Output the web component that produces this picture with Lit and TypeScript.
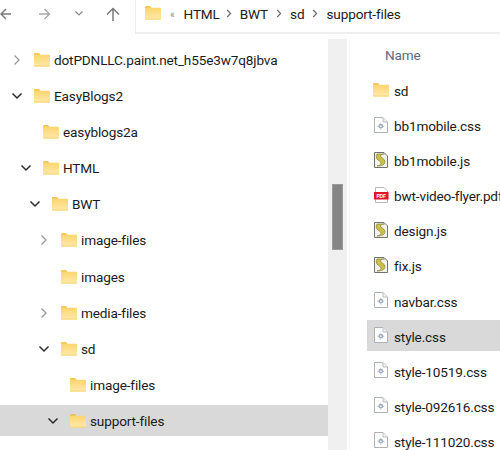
import { LitElement, html, css, svg } from "lit";
import { customElement } from "lit/decorators.js";

type TreeRow = { name: string; level: number; chev?: "open" | "closed"; sel?: boolean };
type FileRow = { name: string; kind: "folder" | "css" | "js" | "pdf"; sel?: boolean };

const tree: TreeRow[] = [
  { name: "dotPDNLLC.paint.net_h55e3w7q8jbva", level: 0, chev: "closed" },
  { name: "EasyBlogs2", level: 0, chev: "open" },
  { name: "easyblogs2a", level: 1 },
  { name: "HTML", level: 1, chev: "open" },
  { name: "BWT", level: 2, chev: "open" },
  { name: "image-files", level: 3, chev: "closed" },
  { name: "images", level: 3 },
  { name: "media-files", level: 3, chev: "closed" },
  { name: "sd", level: 3, chev: "open" },
  { name: "image-files", level: 4 },
  { name: "support-files", level: 4, chev: "open", sel: true },
];

const files: FileRow[] = [
  { name: "sd", kind: "folder" },
  { name: "bb1mobile.css", kind: "css" },
  { name: "bb1mobile.js", kind: "js" },
  { name: "bwt-video-flyer.pdf", kind: "pdf" },
  { name: "design.js", kind: "js" },
  { name: "fix.js", kind: "js" },
  { name: "navbar.css", kind: "css" },
  { name: "style.css", kind: "css", sel: true },
  { name: "style-10519.css", kind: "css" },
  { name: "style-092616.css", kind: "css" },
  { name: "style-111020.css", kind: "css" },
];

const folder = svg`<svg class="ico" width="16" height="14" viewBox="0 0 16 14">
  <defs><linearGradient id="fg" x1="0" y1="0" x2="0" y2="1"><stop offset="0" stop-color="#fcd56e"/><stop offset="1" stop-color="#ffe9ad"/></linearGradient></defs>
  <path d="M0 1.5C0 .7.5.2 1.2.2H5l1.6 1.6H0z" fill="#f4b51f"/>
  <rect x="0" y="1.8" width="16" height="11.7" rx=".6" fill="url(#fg)"/>
  <rect x="0" y="12.6" width="16" height=".9" fill="#f8cf62"/>
</svg>`;

const pageOutline = svg`<path d="M.5.5H9L13.5 5V15.5H.5z" fill="#fff" stroke="#aeb1b6"/><path d="M9 .5V5h4.5" fill="#eef0f2" stroke="#bcbfc3"/>`;

const cssIcon = svg`<svg class="ico" width="14" height="16" viewBox="0 0 14 16">${pageOutline}
  <circle cx="6.8" cy="9.2" r="2.4" fill="#9fadbd"/><circle cx="6.8" cy="9.2" r="1" fill="#e6eaee"/>
  <path d="M6.8 5.8v1M6.8 11.6v1M3.4 9.2h1M9.2 9.2h1" stroke="#a9b6c4" stroke-width="1"/></svg>`;

const jsIcon = svg`<svg class="ico" width="14" height="16" viewBox="0 0 14 16">
  <path d="M.5.5H10L13.5 4V15.5H.5z" fill="#f4f4ee" stroke="#73736e"/>
  <path d="M3 2H10.5C8.5 2 6.5 2.6 6.5 4.2 6.5 5.8 11 6.4 11 9.6 11 12.6 8 14 3 14 5.6 13.4 7 12.8 7 11.2 7 9 2.2 8 2.2 5 2.2 3.6 2.6 2.6 3 2z" fill="#cdbf45" stroke="#7a7636" stroke-width=".6"/></svg>`;

const pdfIcon = svg`<svg class="ico" width="15" height="16" viewBox="0 0 15 16">
  <path d="M1.5.5H10L13.5 4V15.5H1.5z" fill="#fff" stroke="#b4b6ba"/>
  <rect x="0" y="5" width="14.5" height="7.5" fill="#e5132a"/>
  <text x="7.2" y="10.6" text-anchor="middle" font-family="Liberation Sans, sans-serif" font-size="5" font-weight="700" fill="#fff">PDF</text></svg>`;

const icons = { folder, css: cssIcon, js: jsIcon, pdf: pdfIcon };

const chevClosed = svg`<svg width="10" height="12" viewBox="0 0 10 12"><path d="M2.5 1.5 7 6 2.5 10.5" fill="none" stroke="#9a9a9a" stroke-width="1.3"/></svg>`;
const chevOpen = svg`<svg width="12" height="10" viewBox="0 0 12 10"><path d="M1.5 2.5 6 7l4.5-4.5" fill="none" stroke="#2b2b2b" stroke-width="1.5"/></svg>`;

const sep = html`<svg class="sep" width="6" height="9" viewBox="0 0 6 9"><path d="M1.2 1 4.6 4.5 1.2 8" fill="none" stroke="#6d6d6d" stroke-width="1.2"/></svg>`;

@customElement("app-root")
export class AppRoot extends LitElement {
  static styles = css`
    :host {
      display: block;
      width: 500px;
      height: 450px;
      overflow: hidden;
      background: #fff;
      color: #1b1b1b;
      font-family: Roboto, "Open Sans", sans-serif;
      font-size: 13.6px;
      letter-spacing: -0.15px;
    }
    .toolbar { display: flex; height: 34px; align-items: stretch; }
    .nav { width: 135px; flex: none; position: relative; }
    .nav svg { position: absolute; }
    .addr {
      flex: 1;
      display: flex;
      align-items: center;
      border-left: 1px solid #efefef;
      border-bottom: 2px solid #efefef;
      padding: 0 0 6px 9px;
      gap: 8px;
      white-space: nowrap;
    }
    .addr .dbl { color: #8a8a8a; font-size: 10px; margin: 0 1px 0 1px; }
    .addr .first { margin-right: -2px; }
    .addr span { padding-top: 2px; }
    .sep { flex: none; }
    .body { display: flex; height: 416px; }
    .tree { width: 328px; flex: none; padding-top: 10.5px; box-sizing: border-box; display: flex; flex-direction: column; gap: 5.1px; }
    .trow { display: flex; align-items: center; height: 31px; flex: none; box-sizing: border-box; white-space: nowrap; }
    .trow.sel { background: #d9d9d9; }
    .tchev { width: 14px; flex: none; display: flex; justify-content: center; margin-right: 10px; }
    .ttext { margin-left: 4px; }
    .ico { flex: none; display: block; }
    .scroll { width: 19px; flex: none; margin-top: 5px; background: #f0f0f0; padding-top: 145px; box-sizing: border-box; display: flex; justify-content: center; align-items: flex-start; }
    .thumb { width: 11px; height: 66px; background: #858585; border: 1px solid #9a9a9a; box-sizing: border-box; }
    .divider { width: 3px; flex: none; margin-top: 5px; box-sizing: border-box; background: #fff; border-right: 1px solid #f3f3f3; }
    .list { flex: 1; min-width: 0; padding-top: 4px; overflow: hidden; }
    .head { height: 36px; padding-left: 35px; color: #5a6b80; }
    .head span { line-height: 34px; }
    .lrows { margin-left: 17px; display: flex; flex-direction: column; gap: 4.1px; }
    .lrow { display: flex; align-items: center; height: 31px; flex: none; white-space: nowrap; padding-left: 6px; box-sizing: border-box; }
    .lrow.sel { background: #d9d9d9; }
    .lic { width: 16px; flex: none; display: flex; justify-content: center; margin-right: 5px; }
    .lname { padding-top: 3px; }
  `;

  render() {
    return html`
      <div class="toolbar">
        <div class="nav">
          <svg style="left:-1px;top:7px" width="14" height="14" viewBox="0 0 14 14"><path d="M12 7H2M7 2 2 7l5 5" fill="none" stroke="#7a7a7a" stroke-width="1.5"/></svg>
          <svg style="left:38px;top:7px" width="14" height="14" viewBox="0 0 14 14"><path d="M1 7h10M6.5 2l5 5-5 5" fill="none" stroke="#a8a8a8" stroke-width="1.5"/></svg>
          <svg style="left:74px;top:10px" width="10" height="7" viewBox="0 0 10 7"><path d="M1.5 1.5 5 5l3.5-3.5" fill="none" stroke="#8a8a8a" stroke-width="1.2"/></svg>
          <svg style="left:106px;top:7px" width="14" height="15" viewBox="0 0 14 15"><path d="M7 14V2M1 7.5 7 1.5l6 6" fill="none" stroke="#7a7a7a" stroke-width="1.5"/></svg>
        </div>
        <div class="addr">
          ${folder}
          <span class="dbl">«</span>
          <span class="first">HTML</span>${sep}<span>BWT</span>${sep}<span>sd</span>${sep}<span>support-files</span>
        </div>
      </div>
      <div class="body">
        <div class="tree">
          ${tree.map(
            (r) => html`<div class="trow ${r.sel ? "sel" : ""}" style="padding-left:${10 + r.level * 9}px">
              <span class="tchev">${r.chev === "open" ? chevOpen : r.chev === "closed" ? chevClosed : ""}</span>
              ${folder}<span class="ttext">${r.name}</span>
            </div>`
          )}
        </div>
        <div class="scroll"><div class="thumb"></div></div>
        <div class="divider"></div>
        <div class="list">
          <div class="head"><span>Name</span></div>
          <div class="lrows">
            ${files.map(
              (f) => html`<div class="lrow ${f.sel ? "sel" : ""}">
                <span class="lic">${icons[f.kind]}</span><span class="lname">${f.name}</span>
              </div>`
            )}
          </div>
        </div>
      </div>
    `;
  }
}
